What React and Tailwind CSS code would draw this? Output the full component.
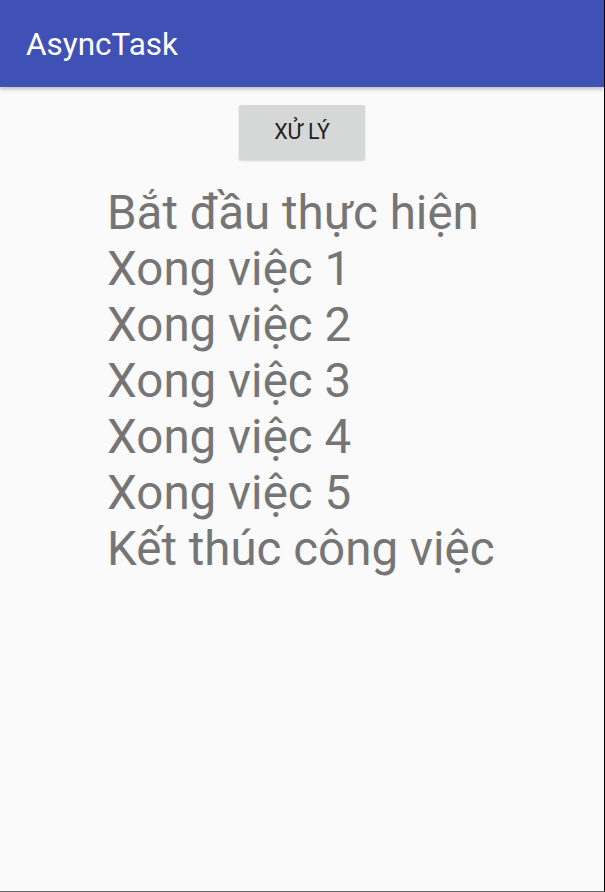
export default function App() {
    const lines = [
        "Bắt đầu thực hiện",
        "Xong việc 1",
        "Xong việc 2",
        "Xong việc 3",
        "Xong việc 4",
        "Xong việc 5",
        "Kết thúc công việc",
    ];

    return (
        <div className="w-[605px] h-[892px] bg-[#fafafa] flex flex-col border-r border-r-black border-b border-b-[#6b6b6b] font-['Roboto',sans-serif] overflow-hidden">
            {/* App bar */}
            <div className="h-[87px] bg-[#3f51b5] flex items-center pl-[26px] pt-[3px] shadow-[0_2px_4px_rgba(0,0,0,0.25)] shrink-0">
                <h1 className="text-white text-[31.5px] leading-none">AsyncTask</h1>
            </div>

            <div className="flex flex-col items-center pt-[18px]">
                <button className="w-[126px] h-[55px] bg-[#d6d7d7] rounded-[2px] text-[#222] text-[21.5px] shadow-[0_1px_2px_rgba(0,0,0,0.15)]">
                    XỬ LÝ
                </button>
            </div>

            <div className="pl-[107px] pt-[25px] flex flex-col">
                {lines.map((line) => (
                    <p key={line} className="text-[#757575] text-[47.5px] leading-[56px]">
                        {line}
                    </p>
                ))}
            </div>
        </div>
    );
}
